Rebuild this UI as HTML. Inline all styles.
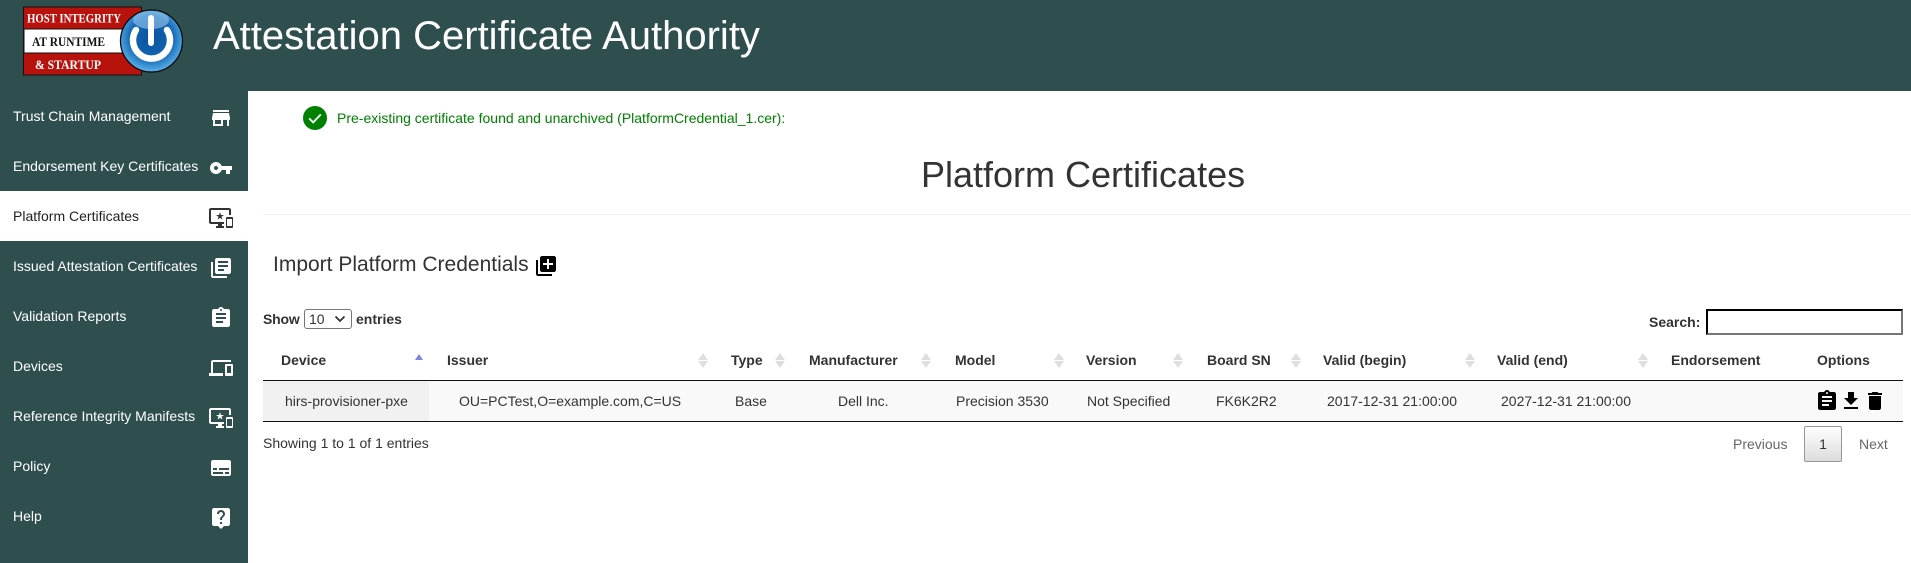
<!DOCTYPE html>
<html lang="en">
<head>
<meta charset="utf-8">
<title>Platform Certificates</title>
<style>
html,body{margin:0;padding:0;width:1911px;height:563px;overflow:hidden;background:#fff}
body{position:relative;font-family:"Liberation Sans",Arial,sans-serif;font-size:14px;color:#333}
.a{position:absolute}
.t{position:absolute;white-space:nowrap;line-height:20px;height:20px}
.b{font-weight:bold}
#hd{left:0;top:0;width:1911px;height:91px;background:#2f4f4f}
#sb{left:0;top:91px;width:248px;height:472px;background:#2f4f4f}
#act{left:0;top:191px;width:248px;height:50px;background:#fff}
.n{color:#fff;left:13px}
.i{position:absolute;width:24px;height:24px;fill:#fff}
.k{fill:#000}
.ar{position:absolute;width:0;height:0;border-left:5px solid transparent;border-right:5px solid transparent}
.u{border-bottom:7px solid #dedede;top:353px}
.d{border-top:7px solid #dedede;top:361px}
</style>
</head>
<body>
<div id="hd" class="a"></div>
<div id="sb" class="a"></div>
<div id="act" class="a"></div>

<svg class="a" style="left:20px;top:4px" width="170" height="74" viewBox="20 4 170 74">
<defs>
<radialGradient id="g" cx="50%" cy="45%" r="55%"><stop offset="0" stop-color="#0a4f9a"/><stop offset=".62" stop-color="#1367b5"/><stop offset="1" stop-color="#5cb3ea"/></radialGradient>
</defs>
<rect x="23.5" y="7" width="118" height="68" fill="#b8120c" stroke="#111" stroke-width="1"/>
<rect x="24" y="29" width="100" height="24" fill="#fff" stroke="#111" stroke-width="1"/>
<text x="27" y="22.500" font-family="Liberation Serif,serif" font-size="13" font-weight="bold" fill="#fff" textLength="94" lengthAdjust="spacingAndGlyphs">HOST INTEGRITY</text>
<text x="32" y="46" font-family="Liberation Serif,serif" font-size="13" font-weight="bold" fill="#111" textLength="73" lengthAdjust="spacingAndGlyphs">AT RUNTIME</text>
<text x="35" y="69" font-family="Liberation Serif,serif" font-size="13" font-weight="bold" fill="#fff" textLength="66" lengthAdjust="spacingAndGlyphs">&amp; STARTUP</text>
<circle cx="151.5" cy="41" r="31" fill="url(#g)" stroke="#0a0a0a" stroke-width="1.3"/>
<ellipse cx="151" cy="20" rx="18" ry="9" fill="#a9d6f5" opacity=".55"/>
<path d="M136 30A18.5 18.5 0 1 0 167 30" fill="none" stroke="#fff" stroke-width="6.5" stroke-linecap="round"/>
<path d="M151 18V43" fill="none" stroke="#fff" stroke-width="6" stroke-linecap="round"/>
</svg>

<div class="t" id="title" style="left:213px;top:13px;height:46px;line-height:46px;font-size:40px;color:#fff">Attestation Certificate Authority</div>

<div class="t n" style="top:106px">Trust Chain Management</div>
<div class="t n" style="top:156px">Endorsement Key Certificates</div>
<div class="t" style="left:13px;top:206px;color:#222">Platform Certificates</div>
<div class="t n" style="top:256px">Issued Attestation Certificates</div>
<div class="t n" style="top:306px">Validation Reports</div>
<div class="t n" style="top:356px">Devices</div>
<div class="t n" style="top:406px">Reference Integrity Manifests</div>
<div class="t n" style="top:456px">Policy</div>
<div class="t n" style="top:506px">Help</div>

<svg class="i" style="left:209px;top:106px" viewBox="0 0 24 24"><path d="M20 4H4v2h16V4zm1 10v-2l-1-5H4l-1 5v2h1v6h10v-6h4v6h2v-6h1zm-9 4H6v-4h6v4z"/></svg>
<svg class="i" style="left:209px;top:156px" viewBox="0 0 24 24"><path d="M12.65 10C11.83 7.67 9.61 6 7 6c-3.31 0-6 2.69-6 6s2.69 6 6 6c2.61 0 4.83-1.67 5.65-4H17v4h4v-4h2v-4H12.65zM7 14c-1.1 0-2-.9-2-2s.9-2 2-2 2 .9 2 2-.9 2-2 2z"/></svg>
<svg class="i" style="left:209px;top:206px;fill:#333" viewBox="0 0 24 24"><path d="M23 11.01L18 11c-.55 0-1 .45-1 1v9c0 .55.45 1 1 1h5c.55 0 1-.45 1-1v-9c0-.55-.45-.99-1-.99zM23 20h-5v-7h5v7zM20 2H2C.89 2 0 2.89 0 4v12c0 1.1.89 2 2 2h7v2H7v2h8v-2h-2v-2h2v-2H2V4h18v5h2V4c0-1.11-.9-2-2-2zm-8.03 7L11 6l-.97 3H7l2.47 1.76-.94 2.91 2.47-1.8 2.47 1.8-.94-2.91L15 9h-3.03z"/></svg>
<svg class="i" style="left:209px;top:256px" viewBox="0 0 24 24"><path d="M4 6H2v14c0 1.1.9 2 2 2h14v-2H4V6zm16-4H8c-1.1 0-2 .9-2 2v12c0 1.1.9 2 2 2h12c1.1 0 2-.9 2-2V4c0-1.1-.9-2-2-2zm-1 9H9V9h10v2zm-4 4H9v-2h6v2zm4-8H9V5h10v2z"/></svg>
<svg class="i" style="left:209px;top:306px" viewBox="0 0 24 24"><path d="M19 3h-4.18C14.4 1.84 13.3 1 12 1c-1.3 0-2.4.84-2.82 2H5c-1.1 0-2 .9-2 2v14c0 1.1.9 2 2 2h14c1.1 0 2-.9 2-2V5c0-1.1-.9-2-2-2zm-7 0c.55 0 1 .45 1 1s-.45 1-1 1-1-.45-1-1 .45-1 1-1zm2 14H7v-2h7v2zm3-4H7v-2h10v2zm0-4H7V7h10v2z"/></svg>
<svg class="i" style="left:209px;top:356px" viewBox="0 0 24 24"><path d="M4 6h18V4H4c-1.1 0-2 .9-2 2v11H0v3h14v-3H4V6zm19 2h-6c-.55 0-1 .45-1 1v10c0 .55.45 1 1 1h6c.55 0 1-.45 1-1V9c0-.55-.45-1-1-1zm-1 9h-4v-7h4v7z"/></svg>
<svg class="i" style="left:209px;top:406px" viewBox="0 0 24 24"><path d="M23 11.01L18 11c-.55 0-1 .45-1 1v9c0 .55.45 1 1 1h5c.55 0 1-.45 1-1v-9c0-.55-.45-.99-1-.99zM23 20h-5v-7h5v7zM20 2H2C.89 2 0 2.89 0 4v12c0 1.1.89 2 2 2h7v2H7v2h8v-2h-2v-2h2v-2H2V4h18v5h2V4c0-1.11-.9-2-2-2zm-8.03 7L11 6l-.97 3H7l2.47 1.76-.94 2.91 2.47-1.8 2.47 1.8-.94-2.91L15 9h-3.03z"/></svg>
<svg class="i" style="left:209px;top:456px" viewBox="0 0 24 24"><path d="M20 4H4c-1.1 0-2 .9-2 2v12c0 1.1.9 2 2 2h16c1.1 0 2-.9 2-2V6c0-1.1-.9-2-2-2zM4 12h4v2H4v-2zm10 6H4v-2h10v2zm6 0h-4v-2h4v2zm0-4H10v-2h10v2z"/></svg>
<svg class="i" style="left:209px;top:506px" viewBox="0 0 24 24"><path d="M19 2H5c-1.11 0-2 .9-2 2v14c0 1.1.89 2 2 2h4l3 3 3-3h4c1.1 0 2-.9 2-2V4c0-1.1-.9-2-2-2zm-6 16h-2v-2h2v2zm2.07-7.75l-.9.92C13.45 11.9 13 12.5 13 14h-2v-.5c0-1.1.45-2.1 1.17-2.83l1.24-1.26c.37-.36.59-.86.59-1.41 0-1.1-.9-2-2-2s-2 .9-2 2H8c0-2.21 1.79-4 4-4s4 1.79 4 4c0 .88-.36 1.68-.93 2.25z"/></svg>

<svg class="a" style="left:303px;top:106px" width="24" height="24" viewBox="0 0 24 24"><circle cx="12" cy="12" r="12" fill="#008000"/><path d="M6.2 12.4l4 4 7.6-8" fill="none" stroke="#fff" stroke-width="1.8"/></svg>
<div class="t" style="left:337px;top:108px;color:#008000">Pre-existing certificate found and unarchived (PlatformCredential_1.cer):</div>

<div class="t" style="left:921px;top:155px;height:40px;line-height:40px;font-size:36px">Platform Certificates</div>
<div class="a" style="left:263px;top:214px;width:1648px;height:1px;background:#eee"></div>

<div class="t" style="left:273px;top:255px;font-size:21px">Import Platform Credentials</div>
<svg class="i k" style="left:534px;top:254px" viewBox="0 0 24 24"><path d="M4 6H2v14c0 1.1.9 2 2 2h14v-2H4V6zm16-4H8c-1.1 0-2 .9-2 2v12c0 1.1.9 2 2 2h12c1.1 0 2-.9 2-2V4c0-1.1-.9-2-2-2zm-1 9h-4v4h-2v-4H9V9h4V5h2v4h4v2z"/></svg>

<div class="t b" style="left:263px;top:309px;font-size:14px;letter-spacing:-.2px">Show</div>
<select class="a" style="left:304px;top:309px;width:48px;height:20px;box-sizing:border-box;appearance:none;-webkit-appearance:none;background:#fff;border:1px solid #767676;border-radius:3px;padding:0 0 0 4px;font:14px 'Liberation Sans',Arial,sans-serif;color:#333;outline:0"><option>10</option></select>
<svg class="a" style="left:334px;top:315px" width="12" height="8" viewBox="0 0 12 8"><path d="M1.5 1.5L6 6l4.500-4.500" fill="none" stroke="#333" stroke-width="1.800"/></svg>
<div class="t b" style="left:356px;top:309px;font-size:14px">entries</div>

<div class="t b" style="left:1649px;top:312px">Search:</div>
<input class="a" type="text" style="left:1706px;top:309px;width:197px;height:26px;box-sizing:border-box;border:2px inset #767676;border-color:#222 #767676 #767676 #222;background:#fff;padding:0;margin:0;outline:0">

<div class="t b" style="left:281px;top:350px">Device</div>
<div class="t b" style="left:447px;top:350px">Issuer</div>
<div class="t b" style="left:731px;top:350px">Type</div>
<div class="t b" style="left:809px;top:350px">Manufacturer</div>
<div class="t b" style="left:955px;top:350px">Model</div>
<div class="t b" style="left:1086px;top:350px">Version</div>
<div class="t b" style="left:1207px;top:350px">Board SN</div>
<div class="t b" style="left:1323px;top:350px">Valid (begin)</div>
<div class="t b" style="left:1497px;top:350px">Valid (end)</div>
<div class="t b" style="left:1671px;top:350px">Endorsement</div>
<div class="t b" style="left:1817px;top:350px">Options</div>

<div class="ar" style="left:415px;top:354px;border-left-width:4px;border-right-width:4px;border-bottom:6px solid #8383dc"></div>
<div class="ar u" style="left:698px"></div><div class="ar d" style="left:698px"></div>
<div class="ar u" style="left:775px"></div><div class="ar d" style="left:775px"></div>
<div class="ar u" style="left:921px"></div><div class="ar d" style="left:921px"></div>
<div class="ar u" style="left:1054px"></div><div class="ar d" style="left:1054px"></div>
<div class="ar u" style="left:1173px"></div><div class="ar d" style="left:1173px"></div>
<div class="ar u" style="left:1291px"></div><div class="ar d" style="left:1291px"></div>
<div class="ar u" style="left:1465px"></div><div class="ar d" style="left:1465px"></div>
<div class="ar u" style="left:1638px"></div><div class="ar d" style="left:1638px"></div>

<div class="a" style="left:263px;top:380px;width:1640px;height:42px;box-sizing:border-box;border-top:1px solid #111;border-bottom:1px solid #111;background:#f9f9f9"></div>
<div class="a" style="left:263px;top:381px;width:166px;height:40px;background:#f1f1f1"></div>

<div class="t" style="left:285px;top:391px">hirs-provisioner-pxe</div>
<div class="t" style="left:459px;top:391px">OU=PCTest,O=example.com,C=US</div>
<div class="t" style="left:735px;top:391px">Base</div>
<div class="t" style="left:838px;top:391px">Dell Inc.</div>
<div class="t" style="left:956px;top:391px">Precision 3530</div>
<div class="t" style="left:1087px;top:391px">Not Specified</div>
<div class="t" style="left:1216px;top:391px">FK6K2R2</div>
<div class="t" style="left:1327px;top:391px">2017-12-31 21:00:00</div>
<div class="t" style="left:1501px;top:391px">2027-12-31 21:00:00</div>

<svg class="i k" style="left:1815px;top:389px" viewBox="0 0 24 24"><path d="M19 3h-4.180C14.400 1.840 13.300 1 12 1c-1.300 0-2.400.840-2.820 2H5c-1.100 0-2 .900-2 2v14c0 1.100.900 2 2 2h14c1.100 0 2-.900 2-2V5c0-1.100-.900-2-2-2zm-7 0c.550 0 1 .450 1 1s-.450 1-1 1-1-.450-1-1 .450-1 1-1zm2 14H7v-2h7v2zm3-4H7v-2h10v2zm0-4H7V7h10v2z"/></svg>
<svg class="i k" style="left:1839px;top:389px" viewBox="0 0 24 24"><path d="M19 9h-4V3H9v6H5l7 7 7-7zM5 18v2h14v-2H5z"/></svg>
<svg class="i k" style="left:1863px;top:389px" viewBox="0 0 24 24"><path d="M6 19c0 1.100.900 2 2 2h8c1.100 0 2-.900 2-2V7H6v12zM19 4h-3.500l-1-1h-5l-1 1H5v2h14V4z"/></svg>

<div class="t" style="left:263px;top:433px">Showing 1 to 1 of 1 entries</div>
<div class="t" style="left:1733px;top:434px;color:#666">Previous</div>
<div class="a" style="left:1804px;top:426px;width:38px;height:36px;box-sizing:border-box;border:1px solid #979797;border-radius:2px;background:linear-gradient(#fff,#dcdcdc);text-align:center;line-height:34px;color:#333">1</div>
<div class="t" style="left:1859px;top:434px;color:#666">Next</div>
</body>
</html>
